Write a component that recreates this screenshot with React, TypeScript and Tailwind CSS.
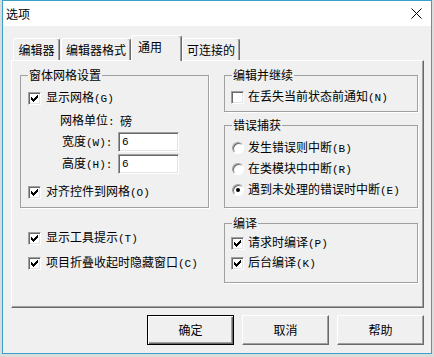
import { FunctionComponent, ReactNode } from "react"

const M: FunctionComponent<{ children: ReactNode }> = ({ children }) => (
    <span className="font-['Liberation_Mono',monospace] text-[11px]">{children}</span>
)

const CheckBox: FunctionComponent<{ checked?: boolean }> = ({ checked }) => (
    <span className="flex w-[13px] h-[13px] shrink-0 items-center justify-center bg-white border border-t-[#a0a0a0] border-l-[#a0a0a0] border-r-white border-b-white shadow-[inset_1px_1px_0_#696969,inset_-1px_-1px_0_#e3e3e3]">
        {checked && (
            <svg width="7" height="7" viewBox="0 0 7 7" shapeRendering="crispEdges">
                <path
                    d="M0 2h1v3H0zM1 3h1v3H1zM2 4h1v3H2zM3 3h1v3H3zM4 2h1v3H4zM5 1h1v3H5zM6 0h1v3H6z"
                    fill="#000"
                />
            </svg>
        )}
    </span>
)

const Radio: FunctionComponent<{ on?: boolean }> = ({ on }) => (
    <span className="flex w-[12px] h-[12px] shrink-0 items-center justify-center rounded-full bg-white border border-t-[#a0a0a0] border-l-[#a0a0a0] border-r-white border-b-white shadow-[inset_1px_1px_0_#696969]">
        {on && <span className="w-[4px] h-[4px] rounded-full bg-black" />}
    </span>
)

const Button: FunctionComponent<{ children: ReactNode; primary?: boolean }> = ({ children, primary }) =>
    primary ? (
        <div className="w-[87px] h-[30px] flex items-center justify-center border border-black shadow-[inset_1px_1px_0_#fff,inset_-1px_-1px_0_#696969,inset_-2px_-2px_0_#a0a0a0]">
            {children}
        </div>
    ) : (
        <div className="w-[87px] h-[30px] flex items-center justify-center border border-t-white border-l-white border-r-[#696969] border-b-[#696969] shadow-[inset_-1px_-1px_0_#a0a0a0]">
            {children}
        </div>
    )

const App: FunctionComponent = () => {
    return (
        <div className="w-[434px] h-[357px] bg-[#dcdcdc] text-black text-[12px] leading-[14px] font-['Noto_Sans_CJK_SC','Noto_Sans',sans-serif]">
            <div className="ml-[2px] w-[430px] h-[354px] flex flex-col border border-[#3a9fc9] bg-[#f0f0f0]">
                {/* title bar */}
                <div className="h-[25px] shrink-0 flex items-center justify-between bg-white pl-[3px] pr-[9px]">
                    <span>选项</span>
                    <svg width="11" height="11" viewBox="0 0 11 11">
                        <path d="M0.5 0.5L10.5 10.5M10.5 0.5L0.5 10.5" stroke="#000" strokeWidth="1" />
                    </svg>
                </div>

                <div className="flex flex-col pt-[9px]">
                    {/* tabs */}
                    <div className="ml-[10px] h-[25px] flex items-end">
                        <div className="w-[47px] h-[22px] flex items-center justify-center rounded-t-[3px] border-l border-t border-r border-l-white border-t-white border-r-[#696969] shadow-[inset_-1px_0_0_#a0a0a0]">
                            编辑器
                        </div>
                        <div className="ml-[1px] w-[70px] h-[22px] flex items-center justify-center rounded-t-[3px] border-l border-t border-r border-l-white border-t-white border-r-[#696969] shadow-[inset_-1px_0_0_#a0a0a0]">
                            编辑器格式
                        </div>
                        <div className="relative z-10 -mb-px w-[51px] h-[26px] flex items-start pl-[6px] pt-[4px] bg-[#f0f0f0] rounded-t-[3px] border-l border-t border-r border-l-white border-t-white border-r-[#696969] shadow-[inset_-1px_0_0_#a0a0a0]">
                            通用
                        </div>
                        <div className="w-[58px] h-[22px] flex items-center justify-center rounded-t-[3px] border-l border-t border-r border-l-white border-t-white border-r-[#696969] shadow-[inset_-1px_0_0_#a0a0a0]">
                            可连接的
                        </div>
                    </div>

                    {/* panel */}
                    <div className="ml-[8px] w-[413px] h-[248px] flex gap-[15px] pt-[7px] pl-[8px] border-l border-t border-r border-b border-l-white border-t-white border-r-[#696969] border-b-[#696969] shadow-[inset_-1px_-1px_0_#a0a0a0]">
                        {/* left column */}
                        <div className="flex flex-col">
                            <fieldset className="w-[189px] h-[140px] border border-[#a0a0a0] shadow-[1px_1px_0_#fff]">
                                <legend className="ml-[7px] px-[1px]">窗体网格设置</legend>
                                <div className="mt-[6px] ml-[7px] h-[20px] flex items-center gap-[5px]">
                                    <CheckBox checked />
                                    <span>显示网格<M>(G)</M></span>
                                </div>
                                <div className="mt-[3px] ml-[39px] h-[20px] flex items-center">
                                    <span className="w-[60px]">网格单位<M>:</M></span>
                                    <span>磅</span>
                                </div>
                                <div className="mt-[1px] ml-[41px] h-[20px] flex items-center">
                                    <span className="w-[56px]">宽度<M>(W):</M></span>
                                    <div className="w-[61px] h-[20px] flex items-center pl-[3px] bg-white border border-t-[#a0a0a0] border-l-[#a0a0a0] border-r-white border-b-white shadow-[inset_1px_1px_0_#696969,inset_-1px_-1px_0_#e3e3e3]">
                                        <M>6</M>
                                    </div>
                                </div>
                                <div className="mt-[2px] ml-[41px] h-[20px] flex items-center">
                                    <span className="w-[56px]">高度<M>(H):</M></span>
                                    <div className="w-[61px] h-[20px] flex items-center pl-[3px] bg-white border border-t-[#a0a0a0] border-l-[#a0a0a0] border-r-white border-b-white shadow-[inset_1px_1px_0_#696969,inset_-1px_-1px_0_#e3e3e3]">
                                        <M>6</M>
                                    </div>
                                </div>
                                <div className="mt-[8px] ml-[7px] h-[20px] flex items-center gap-[5px]">
                                    <CheckBox checked />
                                    <span>对齐控件到网格<M>(O)</M></span>
                                </div>
                            </fieldset>

                            <div className="mt-[20px] ml-[8px] h-[20px] flex items-center gap-[5px]">
                                <CheckBox checked />
                                <span>显示工具提示<M>(T)</M></span>
                            </div>
                            <div className="mt-[5px] ml-[8px] h-[20px] flex items-center gap-[5px]">
                                <CheckBox checked />
                                <span>项目折叠收起时隐藏窗口<M>(C)</M></span>
                            </div>
                        </div>

                        {/* right column */}
                        <div className="flex flex-col">
                            <fieldset className="w-[194px] h-[44px] border border-[#a0a0a0] shadow-[1px_1px_0_#fff]">
                                <legend className="ml-[7px] px-[1px]">编辑并继续</legend>
                                <div className="mt-[5px] ml-[6px] h-[20px] flex items-center gap-[4px]">
                                    <CheckBox />
                                    <span>在丢失当前状态前通知<M>(N)</M></span>
                                </div>
                            </fieldset>

                            <fieldset className="mt-[6px] w-[194px] h-[90px] border border-[#a0a0a0] shadow-[1px_1px_0_#fff]">
                                <legend className="ml-[7px] px-[1px]">错误捕获</legend>
                                <div className="mt-[5px] ml-[7px] h-[21px] flex items-center gap-[4px]">
                                    <Radio />
                                    <span>发生错误则中断<M>(B)</M></span>
                                </div>
                                <div className="ml-[7px] h-[21px] flex items-center gap-[4px]">
                                    <Radio />
                                    <span>在类模块中中断<M>(R)</M></span>
                                </div>
                                <div className="ml-[7px] h-[21px] flex items-center gap-[4px]">
                                    <Radio on />
                                    <span>遇到未处理的错误时中断<M>(E)</M></span>
                                </div>
                            </fieldset>

                            <fieldset className="mt-[8px] w-[194px] h-[67px] border border-[#a0a0a0] shadow-[1px_1px_0_#fff]">
                                <legend className="ml-[7px] px-[1px]">编译</legend>
                                <div className="mt-[3px] ml-[6px] h-[20px] flex items-center gap-[4px]">
                                    <CheckBox checked />
                                    <span>请求时编译<M>(P)</M></span>
                                </div>
                                <div className="ml-[6px] h-[20px] flex items-center gap-[4px]">
                                    <CheckBox checked />
                                    <span>后台编译<M>(K)</M></span>
                                </div>
                            </fieldset>
                        </div>
                    </div>

                    {/* buttons */}
                    <div className="ml-[8px] w-[413px] mt-[7px] flex justify-end gap-[8px]">
                        <Button primary>确定</Button>
                        <Button>取消</Button>
                        <Button>帮助</Button>
                    </div>
                </div>
            </div>
        </div>
    )
}

export default App
